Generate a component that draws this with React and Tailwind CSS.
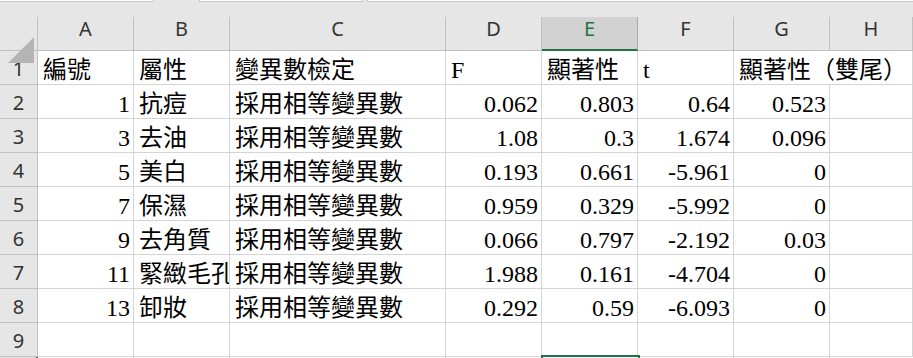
import React from "react";

const cols = ["A", "B", "C", "D", "E", "F", "G", "H"];

const rows = [
  ["編號", "屬性", "變異數檢定", "F", "顯著性", "t", "顯著性（雙尾）", ""],
  ["1", "抗痘", "採用相等變異數", "0.062", "0.803", "0.64", "0.523", ""],
  ["3", "去油", "採用相等變異數", "1.08", "0.3", "1.674", "0.096", ""],
  ["5", "美白", "採用相等變異數", "0.193", "0.661", "-5.961", "0", ""],
  ["7", "保濕", "採用相等變異數", "0.959", "0.329", "-5.992", "0", ""],
  ["9", "去角質", "採用相等變異數", "0.066", "0.797", "-2.192", "0.03", ""],
  ["11", "緊緻毛孔", "採用相等變異數", "1.988", "0.161", "-4.704", "0", ""],
  ["13", "卸妝", "採用相等變異數", "0.292", "0.59", "-6.093", "0", ""],
  ["", "", "", "", "", "", "", ""],
];

const isNum = (v) => /^-?[0-9.]+$/.test(v);

const gridCols = "grid grid-cols-[38px_96px_96px_216px_96px_96px_96px_96px_1fr]";

export default function App() {
  return (
    <div className="w-[913px] h-[358px] overflow-hidden bg-[#e6e6e6]">
      {/* formula bar remnants */}
      <div className="flex h-[17px] gap-0">
        <div className="w-[154px] h-[2px] bg-white border-b border-r border-[#c6c6c6]" />
        <div className="w-[45px]" />
        <div className="w-[164px] h-[2px] bg-white border-b border-l border-r border-[#c6c6c6]" />
        <div className="w-[4px]" />
        <div className="flex-1 h-[2px] bg-white border-b border-l border-[#c6c6c6]" />
      </div>

      {/* column headers */}
      <div className={`${gridCols} h-[34px] font-['Noto_Sans',sans-serif] text-[20px] leading-[20px] text-[#333]`}>
        <div className="relative border-r border-b border-[#c0c0c0] bg-[#e6e6e6]">
          <svg className="absolute left-[8px] top-[20px]" width="26" height="26" viewBox="0 0 26 26">
            <polygon points="26,0 26,26 0,26" fill="#b4b4b4" />
          </svg>
        </div>
        {cols.map((c) =>
          c === "E" ? (
            <div
              key={c}
              className="flex justify-center pt-[2px] bg-[#d2d2d2] border-r border-[#ababab] border-b-2 border-b-[#217346] text-[#217346]"
            >
              {c}
            </div>
          ) : (
            <div key={c} className="flex justify-center pt-[2px] border-r border-b border-[#c0c0c0]">
              {c}
            </div>
          )
        )}
      </div>

      {/* data rows */}
      <div className="bg-white">
        {rows.map((r, i) => (
          <div key={i} className={`${gridCols} h-[34px]`}>
            <div className="flex justify-center pt-[8px] bg-[#e6e6e6] border-r border-b border-[#c0c0c0] font-['Noto_Sans',sans-serif] text-[20px] leading-[20px] text-[#333]">
              {i + 1}
            </div>
            {r.map((v, j) => {
              const overflow = i === 0 && j === 6;
              return (
                <div
                  key={j}
                  className={`flex pt-[7px] border-b border-[#d4d4d4] whitespace-nowrap font-['Liberation_Serif','Noto_Sans_CJK_TC',serif] text-[24px] leading-[24px] text-black ${
                    overflow ? "overflow-visible relative z-10" : "overflow-hidden border-r"
                  } ${isNum(v) ? "justify-end pr-[3px]" : "justify-start pl-[5px]"}`}
                >
                  {v}
                </div>
              );
            })}
          </div>
        ))}
        {/* row 10 with the active cell */}
        <div className={`${gridCols} h-[34px]`}>
          <div className="bg-[#e6e6e6] border-r-2 border-[#217346]" />
          <div className="border-r border-[#d4d4d4]" />
          <div className="border-r border-[#d4d4d4]" />
          <div className="border-r border-[#d4d4d4]" />
          <div className="border-r border-[#d4d4d4]" />
          <div className="relative">
            <div className="absolute -top-[2px] -left-[1px] -right-[2px] h-[40px] border-2 border-[#217346]" />
          </div>
          <div className="border-r border-[#d4d4d4]" />
          <div className="border-r border-[#d4d4d4]" />
          <div />
        </div>
      </div>
    </div>
  );
}
